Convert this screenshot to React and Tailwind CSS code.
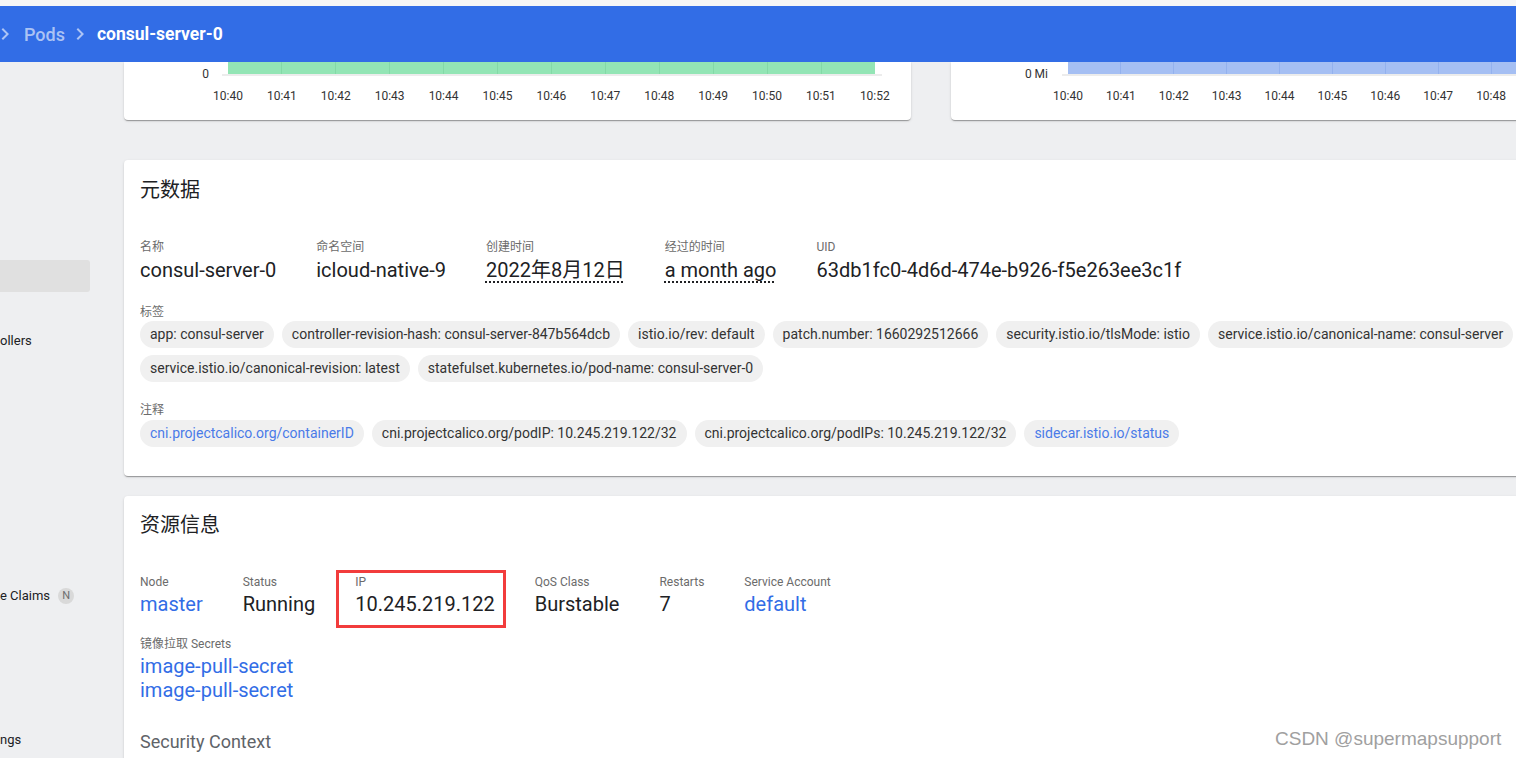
import React from "react";

const FONT = "font-[Roboto,'Noto_Sans_CJK_SC',sans-serif]";
const SHADOW =
  "shadow-[0_2px_1px_-1px_rgba(0,0,0,0.2),0_1px_1px_0_rgba(0,0,0,0.14),0_1px_3px_0_rgba(0,0,0,0.12)]";

const times = ["10:40","10:41","10:42","10:43","10:44","10:45","10:46","10:47","10:48","10:49","10:50","10:51","10:52"];

function Chevron({ className }) {
  return (
    <svg width="24" height="24" viewBox="0 0 24 24" className={className} fill="currentColor">
      <path d="M10 6L8.59 7.41 13.17 12l-4.58 4.59L10 18l6-6z" />
    </svg>
  );
}

function Chip({ children, link }) {
  return (
    <div
      className={`h-[27px] leading-[27px] px-[10px] rounded-full bg-[#f0f0f0] text-[14px] whitespace-nowrap ${
        link ? "text-[#4a7be8]" : "text-[#333333]"
      }`}
    >
      {children}
    </div>
  );
}

function Field({ label, children, extra }) {
  return (
    <div className="relative flex flex-col">
      {extra}
      <div className="text-[12px] leading-[16px] text-[#6b6b6b]">{label}</div>
      {children}
    </div>
  );
}

export default function App() {
  return (
    <div className={`${FONT} relative w-[1516px] h-[758px] overflow-hidden bg-[#eeeff1]`}>
      <div className="h-[6px] bg-[#f6f6f6]" />
      <div className="h-[56px] bg-[#326de6] flex items-center relative z-10">
        <div className="flex items-center ml-[-7px] text-[18px] font-medium">
          <Chevron className="text-white/60" />
          <span className="ml-[7px] text-white/60">Pods</span>
          <Chevron className="ml-[3px] text-white/60" />
          <span className="ml-[5px] text-white font-bold text-[17.5px]">consul-server-0</span>
        </div>
      </div>

      <div className="flex">
        {/* Sidebar */}
        <div className="w-[124px] shrink-0 flex flex-col pt-[198px] text-[13px] text-[#202124]">
          <div className="h-[32px] w-[90px] bg-[#e0e0e0] rounded-r-[3px]" />
          <div className="mt-[39px] leading-[20px]">ollers</div>
          <div className="mt-[235px] leading-[20px] flex items-center">
            <span>e Claims</span>
            <span className="ml-[8px] w-[16px] h-[16px] rounded-full bg-[#d9d9d9] text-[#6e6e6e] text-[11px] leading-[16px] text-center">
              N
            </span>
          </div>
          <div className="mt-[124px] leading-[20px]">ngs</div>
        </div>

        {/* Main */}
        <div className="w-[1614px] shrink-0 flex flex-col">
          <div className="flex gap-x-[40px]">
            {/* CPU chart */}
            <div className={`w-[787px] h-[58px] bg-white rounded-b-[4px] ${SHADOW}`}>
              <div className="flex">
                <div className="w-[104px] h-[12px] pr-[19px] text-right text-[12px] leading-[24px] text-[#333]">0</div>
                <div className="w-[647px] h-[12px] bg-[#93e5b5] flex">
                  {Array.from({ length: 12 }).map((_, i) => (
                    <div key={i} className={`flex-1 ${i > 0 ? "border-l border-[#84d9a7]" : ""}`} />
                  ))}
                </div>
              </div>
              <div className="ml-[98px] w-[660px] h-[2px] bg-[#ececec]" />
              <div className="flex ml-[77px] mt-[13px]">
                {times.map((t) => (
                  <div key={t} className="w-[53.92px] text-center text-[12px] leading-[14px] text-[#333]">
                    {t}
                  </div>
                ))}
              </div>
            </div>
            {/* Memory chart */}
            <div className={`w-[787px] h-[58px] bg-white rounded-b-[4px] ${SHADOW}`}>
              <div className="flex">
                <div className="w-[117px] h-[12px] pr-[20px] text-right text-[12px] leading-[24px] text-[#333]">0 Mi</div>
                <div className="w-[635px] h-[12px] bg-[#a5bff3] flex">
                  {Array.from({ length: 12 }).map((_, i) => (
                    <div key={i} className={`flex-1 ${i > 0 ? "border-l border-[#93b1ee]" : ""}`} />
                  ))}
                </div>
              </div>
              <div className="ml-[111px] w-[648px] h-[2px] bg-[#ececec]" />
              <div className="flex ml-[90.5px] mt-[13px]">
                {times.map((t) => (
                  <div key={t} className="w-[52.9px] text-center text-[12px] leading-[14px] text-[#333]">
                    {t}
                  </div>
                ))}
              </div>
            </div>
          </div>

          {/* Metadata */}
          <div className={`mt-[40px] bg-white rounded-[4px] ${SHADOW} pt-[18px] pb-[29px] px-[16px]`}>
            <div className="text-[20px] leading-[24px] text-[#202124]">元数据</div>
            <div className="flex gap-x-[40px] mt-[37px] text-[20px] leading-[24px] text-[#202124]">
              <Field label="名称"><div className="mt-[3px]">consul-server-0</div></Field>
              <Field label="命名空间"><div className="mt-[3px]">icloud-native-9</div></Field>
              <Field label="创建时间">
                <div className="mt-[3px] underline decoration-dotted decoration-[2px] underline-offset-[4px]">2022年8月12日</div>
              </Field>
              <Field label="经过的时间">
                <div className="mt-[3px] underline decoration-dotted decoration-[2px] underline-offset-[4px]">a month ago</div>
              </Field>
              <Field label="UID"><div className="mt-[3px]">63db1fc0-4d6d-474e-b926-f5e263ee3c1f</div></Field>
            </div>
            <div className="mt-[22px] text-[12px] leading-[16px] text-[#6b6b6b]">标签</div>
            <div className="mt-[1px] flex flex-wrap gap-x-[8px] gap-y-[7px]">
              <Chip>app: consul-server</Chip>
              <Chip>controller-revision-hash: consul-server-847b564dcb</Chip>
              <Chip>istio.io/rev: default</Chip>
              <Chip>patch.number: 1660292512666</Chip>
              <Chip>security.istio.io/tlsMode: istio</Chip>
              <Chip>service.istio.io/canonical-name: consul-server</Chip>
              <Chip>service.istio.io/canonical-revision: latest</Chip>
              <Chip>statefulset.kubernetes.io/pod-name: consul-server-0</Chip>
            </div>
            <div className="mt-[20px] text-[12px] leading-[16px] text-[#6b6b6b]">注释</div>
            <div className="mt-[2px] flex flex-wrap gap-x-[8px] gap-y-[7px]">
              <Chip link>cni.projectcalico.org/containerID</Chip>
              <Chip>cni.projectcalico.org/podIP: 10.245.219.122/32</Chip>
              <Chip>cni.projectcalico.org/podIPs: 10.245.219.122/32</Chip>
              <Chip link>sidecar.istio.io/status</Chip>
            </div>
          </div>

          {/* Resource info */}
          <div className={`mt-[20px] bg-white rounded-[4px] ${SHADOW} pt-[17px] pb-[20px] px-[16px]`}>
            <div className="text-[20px] leading-[24px] text-[#202124]">资源信息</div>
            <div className="flex gap-x-[40px] mt-[37px] text-[20px] leading-[24px] text-[#202124]">
              <Field label="Node"><div className="mt-[2px] text-[#326de6]">master</div></Field>
              <Field label="Status"><div className="mt-[2px]">Running</div></Field>
              <Field
                label="IP"
                extra={
                  <span className="absolute left-[-19px] top-[-4px] w-[170px] h-[58px] border-[3px] border-[#f23c3c]" />
                }
              >
                <div className="mt-[2px]">10.245.219.122</div>
              </Field>
              <Field label="QoS Class"><div className="mt-[2px]">Burstable</div></Field>
              <Field label="Restarts"><div className="mt-[2px]">7</div></Field>
              <Field label="Service Account"><div className="mt-[2px] text-[#326de6]">default</div></Field>
            </div>
            <div className="mt-[20px] text-[12px] leading-[16px] text-[#6b6b6b]">镜像拉取 Secrets</div>
            <div className="mt-[2px] text-[20px] leading-[24px] text-[#326de6]">
              <div>image-pull-secret</div>
              <div>image-pull-secret</div>
            </div>
            <div className="mt-[28px] text-[18px] leading-[24px] text-[#5f6368]">Security Context</div>
          </div>
        </div>
      </div>

      <div className="absolute left-[1275px] top-[728px] font-['Liberation_Sans',Arial,sans-serif] text-[19px] leading-[22px] text-[#a0a0a0] whitespace-nowrap">
        CSDN @supermapsupport
      </div>
    </div>
  );
}
